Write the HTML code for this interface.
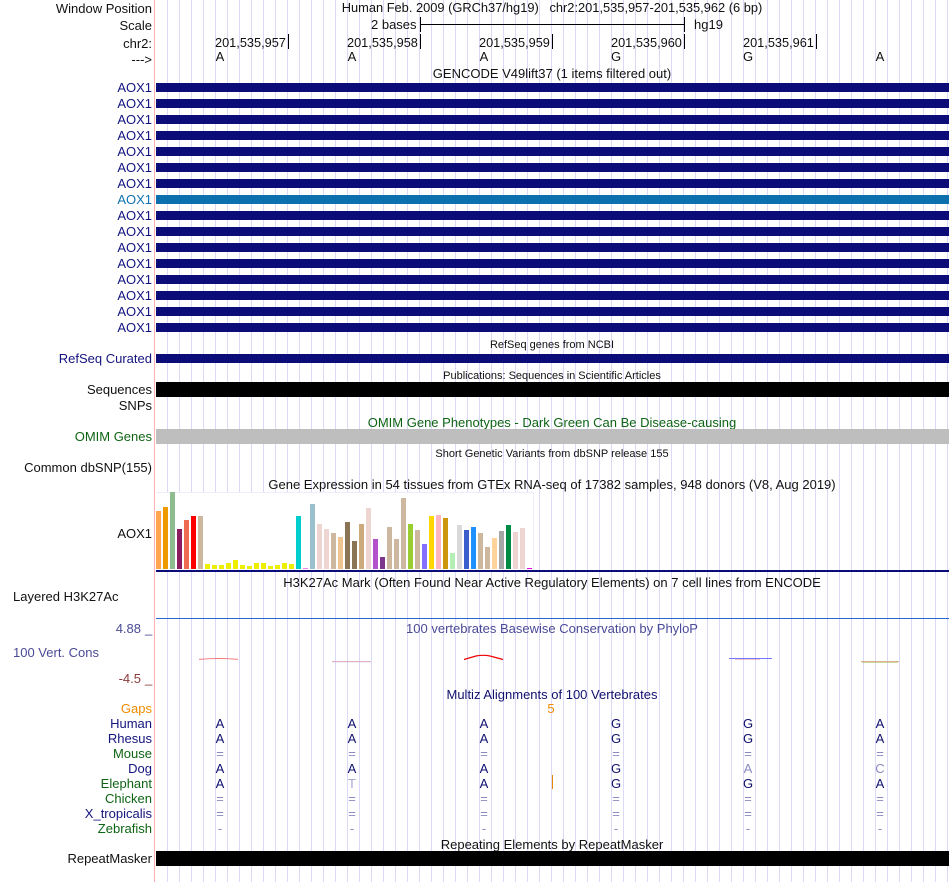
<!DOCTYPE html>
<html>
<head>
<meta charset="utf-8">
<title>Genome Browser</title>
<style>
html,body{margin:0;padding:0;background:#fff;}
#p{position:relative;width:950px;height:882px;overflow:hidden;background:#fff;font-family:"Liberation Sans",sans-serif;font-size:13px;line-height:14px;color:#111;}
#grid{position:absolute;left:156px;top:0;width:794px;height:882px;background:repeating-linear-gradient(to right,transparent 0,transparent 11px,#dad9f8 11px,#dad9f8 12px);}
#pink{position:absolute;left:154px;top:0;width:1px;height:882px;background:#ffb0b0;}
#p span{position:absolute;white-space:pre;}
.r{right:798px;}
.c{left:552px;transform:translateX(-50%);}
.m{transform:translateX(-50%);}
.s{font-size:11px;}
.o{font-size:12.75px;}
.b{position:absolute;left:156px;width:793px;}
.g{background:#0c0c78;height:9px;}
.k{background:#000;height:15px;}
.t{position:absolute;background:#000;width:1px;}
.n{color:#14147e;}
.v{color:#10106e;}
.d{color:#0f6414;}
.e{color:#8a8ac0;}
.f{color:#a8a8d0;}
</style>
</head>
<body>
<div id="p">
<div id="grid"></div>
<div id="pink"></div>

<span class="r" style="top:2px">Window Position</span>
<span class="c" style="top:1px;font-size:12.85px">Human Feb. 2009 (GRCh37/hg19)   chr2:201,535,957-201,535,962 (6 bp)</span>
<span class="r" style="top:19px">Scale</span>
<span style="top:18px;left:371px">2 bases</span>
<div class="t" style="left:420px;top:17px;height:15px"></div>
<div class="t" style="left:420px;top:24px;height:1px;width:265px"></div>
<div class="t" style="left:684px;top:17px;height:15px"></div>
<span style="top:18px;left:694px">hg19</span>
<span class="r" style="top:37px">chr2:</span>
<span class="o" style="top:36px;left:215px">201,535,957</span><div class="t" style="left:288px;top:34px;height:15px"></div>
<span class="o" style="top:36px;left:347px">201,535,958</span><div class="t" style="left:420px;top:34px;height:15px"></div>
<span class="o" style="top:36px;left:479px">201,535,959</span><div class="t" style="left:552px;top:34px;height:15px"></div>
<span class="o" style="top:36px;left:611px">201,535,960</span><div class="t" style="left:684px;top:34px;height:15px"></div>
<span class="o" style="top:36px;left:743px">201,535,961</span><div class="t" style="left:816px;top:34px;height:15px"></div>
<span class="r" style="top:53px">---&gt;</span>
<span class="m" style="top:50px;left:220px">A</span>
<span class="m" style="top:50px;left:352px">A</span>
<span class="m" style="top:50px;left:484px">A</span>
<span class="m" style="top:50px;left:616px">G</span>
<span class="m" style="top:50px;left:748px">G</span>
<span class="m" style="top:50px;left:880px">A</span>
<span class="c" style="top:67px">GENCODE V49lift37 (1 items filtered out)</span>

<span class="r n" style="top:81px">AOX1</span><div class="b g" style="top:83px"></div>
<span class="r n" style="top:97px">AOX1</span><div class="b g" style="top:99px"></div>
<span class="r n" style="top:113px">AOX1</span><div class="b g" style="top:115px"></div>
<span class="r n" style="top:129px">AOX1</span><div class="b g" style="top:131px"></div>
<span class="r n" style="top:145px">AOX1</span><div class="b g" style="top:147px"></div>
<span class="r n" style="top:161px">AOX1</span><div class="b g" style="top:163px"></div>
<span class="r n" style="top:177px">AOX1</span><div class="b g" style="top:179px"></div>
<span class="r" style="top:193px;color:#1072b0">AOX1</span><div class="b g" style="top:195px;background:#0c6fae"></div>
<span class="r n" style="top:209px">AOX1</span><div class="b g" style="top:211px"></div>
<span class="r n" style="top:225px">AOX1</span><div class="b g" style="top:227px"></div>
<span class="r n" style="top:241px">AOX1</span><div class="b g" style="top:243px"></div>
<span class="r n" style="top:257px">AOX1</span><div class="b g" style="top:259px"></div>
<span class="r n" style="top:273px">AOX1</span><div class="b g" style="top:275px"></div>
<span class="r n" style="top:289px">AOX1</span><div class="b g" style="top:291px"></div>
<span class="r n" style="top:305px">AOX1</span><div class="b g" style="top:307px"></div>
<span class="r n" style="top:321px">AOX1</span><div class="b g" style="top:323px"></div>

<span class="c s" style="top:338px">RefSeq genes from NCBI</span>
<span class="r n" style="top:352px">RefSeq Curated</span><div class="b g" style="top:354px"></div>
<span class="c s" style="top:369px">Publications: Sequences in Scientific Articles</span>
<span class="r" style="top:383px">Sequences</span><div class="b k" style="top:382px"></div>
<span class="r" style="top:399px">SNPs</span>
<span class="c d" style="top:416px">OMIM Gene Phenotypes - Dark Green Can Be Disease-causing</span>
<span class="r d" style="top:430px">OMIM Genes</span><div class="b" style="top:429px;height:15px;background:#bebebe"></div>
<span class="c s" style="top:447px">Short Genetic Variants from dbSNP release 155</span>
<span class="r" style="top:461px">Common dbSNP(155)</span>
<span class="c" style="top:478px">Gene Expression in 54 tissues from GTEx RNA-seq of 17382 samples, 948 donors (V8, Aug 2019)</span>

<svg style="position:absolute;left:156px;top:492px" width="794" height="80" viewBox="156 492 794 80">
<rect x="156" y="492" width="378" height="78" fill="#fff"/>
<path d="M156 492.5H533.5V570" fill="none" stroke="#eeedfb"/>
<rect x="156" y="511" width="5" height="58" fill="#ffa54f"/>
<rect x="163" y="507" width="5" height="62" fill="#ee9a00"/>
<rect x="170" y="492" width="5" height="77" fill="#8fbc8f"/>
<rect x="177" y="529" width="5" height="40" fill="#8b1c62"/>
<rect x="184" y="520" width="5" height="49" fill="#ee6a50"/>
<rect x="191" y="516" width="5" height="53" fill="#ff0000"/>
<rect x="198" y="516" width="5" height="53" fill="#cdb79e"/>
<rect x="205" y="564" width="5" height="5" fill="#eeee00"/>
<rect x="212" y="565" width="5" height="4" fill="#eeee00"/>
<rect x="219" y="565" width="5" height="4" fill="#eeee00"/>
<rect x="226" y="563" width="5" height="6" fill="#eeee00"/>
<rect x="233" y="560" width="5" height="9" fill="#eeee00"/>
<rect x="240" y="565" width="5" height="4" fill="#eeee00"/>
<rect x="247" y="566" width="5" height="3" fill="#eeee00"/>
<rect x="254" y="563" width="5" height="6" fill="#eeee00"/>
<rect x="261" y="563" width="5" height="6" fill="#eeee00"/>
<rect x="268" y="566" width="5" height="3" fill="#eeee00"/>
<rect x="275" y="565" width="5" height="4" fill="#eeee00"/>
<rect x="282" y="563" width="5" height="6" fill="#eeee00"/>
<rect x="289" y="564" width="5" height="5" fill="#eeee00"/>
<rect x="296" y="516" width="5" height="53" fill="#00cdcd"/>
<rect x="303" y="568" width="5" height="1" fill="#ee82ee"/>
<rect x="310" y="504" width="5" height="65" fill="#9ac0cd"/>
<rect x="317" y="524" width="5" height="45" fill="#eed5d2"/>
<rect x="324" y="529" width="5" height="40" fill="#eed5d2"/>
<rect x="331" y="533" width="5" height="36" fill="#cdb79e"/>
<rect x="338" y="537" width="5" height="32" fill="#eec591"/>
<rect x="345" y="522" width="5" height="47" fill="#8b7355"/>
<rect x="352" y="541" width="5" height="28" fill="#8b7355"/>
<rect x="359" y="524" width="5" height="45" fill="#cdaa7d"/>
<rect x="366" y="508" width="5" height="61" fill="#eed5d2"/>
<rect x="373" y="539" width="5" height="30" fill="#b452cd"/>
<rect x="380" y="557" width="5" height="12" fill="#7a378b"/>
<rect x="387" y="527" width="5" height="42" fill="#cdb79e"/>
<rect x="394" y="539" width="5" height="30" fill="#cdb79e"/>
<rect x="401" y="498" width="5" height="71" fill="#cdb79e"/>
<rect x="408" y="524" width="5" height="45" fill="#9acd32"/>
<rect x="415" y="530" width="5" height="39" fill="#cdb79e"/>
<rect x="422" y="544" width="5" height="25" fill="#8470ff"/>
<rect x="429" y="516" width="5" height="53" fill="#ffd700"/>
<rect x="436" y="515" width="5" height="54" fill="#ffb6c1"/>
<rect x="443" y="518" width="5" height="51" fill="#cd950c"/>
<rect x="450" y="553" width="5" height="16" fill="#b4eeb4"/>
<rect x="457" y="525" width="5" height="44" fill="#d9d9d9"/>
<rect x="464" y="530" width="5" height="39" fill="#3a5fcd"/>
<rect x="471" y="527" width="5" height="42" fill="#1e90ff"/>
<rect x="478" y="533" width="5" height="36" fill="#cdb79e"/>
<rect x="485" y="547" width="5" height="22" fill="#cdb79e"/>
<rect x="492" y="538" width="5" height="31" fill="#ffd39b"/>
<rect x="499" y="531" width="5" height="38" fill="#a6a6a6"/>
<rect x="506" y="525" width="5" height="44" fill="#008b45"/>
<rect x="513" y="532" width="5" height="37" fill="#eed5d2"/>
<rect x="520" y="528" width="5" height="41" fill="#eed5d2"/>
<rect x="527" y="568" width="5" height="1" fill="#ee00ee"/>
<rect x="156" y="570" width="793" height="2" fill="#0c0c78"/>
</svg>
<span class="r" style="top:527px">AOX1</span>

<span class="c" style="top:576px">H3K27Ac Mark (Often Found Near Active Regulatory Elements) on 7 cell lines from ENCODE</span>
<span style="top:590px;left:13px">Layered H3K27Ac</span>
<div class="b" style="top:618px;height:1px;background:#2a66d0"></div>

<span style="top:622px;right:809px;color:#4a4a96">4.88</span>
<span style="top:622px;left:145px;color:#4a4a96">_</span>
<span class="c" style="top:622px;color:#4a4a96">100 vertebrates Basewise Conservation by PhyloP</span>
<span style="top:646px;left:13px;color:#4a4a96">100 Vert. Cons</span>
<span style="top:672px;right:809px;color:#8b3a3a">-4.5</span>
<span style="top:672px;left:145px;color:#8b3a3a">_</span>

<svg style="position:absolute;left:156px;top:650px" width="794" height="20" viewBox="156 650 794 20" fill="none">
<path d="M199 659.3Q219 657.8 238 659.3" stroke="#f86060" stroke-width=".8"/>
<path d="M332 661.5H371" stroke="#eca0a0" stroke-width=".7"/>
<path d="M332 662H371" stroke="#a8a8e4" stroke-width=".4"/>
<path d="M464 659.5L476 656Q483 654.6 490 656L503 659.5" stroke="#f00000" stroke-width="1.2"/>
<path d="M729 658.5H772" stroke="#4a4aff" stroke-width=".8"/>
<path d="M735 659.4H760" stroke="#d890a0" stroke-width=".5"/>
<path d="M861 661.5H899" stroke="#d09868" stroke-width=".7"/>
<path d="M862 662.3H898" stroke="#b0c060" stroke-width=".6"/>
</svg>

<span class="c" style="top:688px;color:#10106e">Multiz Alignments of 100 Vertebrates</span>
<span class="r" style="top:702px;color:#f08c00">Gaps</span>
<span class="m" style="top:702px;left:551px;color:#f08c00">5</span>
<span class="r n" style="top:717px">Human</span>
<span class="r n" style="top:732px">Rhesus</span>
<span class="r d" style="top:747px">Mouse</span>
<span class="r n" style="top:762px">Dog</span>
<span class="r d" style="top:777px">Elephant</span>
<span class="r d" style="top:792px">Chicken</span>
<span class="r n" style="top:807px">X_tropicalis</span>
<span class="r d" style="top:822px">Zebrafish</span>

<span class="m v" style="top:717px;left:220px">A</span><span class="m v" style="top:717px;left:352px">A</span><span class="m v" style="top:717px;left:484px">A</span><span class="m v" style="top:717px;left:616px">G</span><span class="m v" style="top:717px;left:748px">G</span><span class="m v" style="top:717px;left:880px">A</span>
<span class="m v" style="top:732px;left:220px">A</span><span class="m v" style="top:732px;left:352px">A</span><span class="m v" style="top:732px;left:484px">A</span><span class="m v" style="top:732px;left:616px">G</span><span class="m v" style="top:732px;left:748px">G</span><span class="m v" style="top:732px;left:880px">A</span>
<span class="m e" style="top:747px;left:220px">=</span><span class="m e" style="top:747px;left:352px">=</span><span class="m e" style="top:747px;left:484px">=</span><span class="m e" style="top:747px;left:616px">=</span><span class="m e" style="top:747px;left:748px">=</span><span class="m e" style="top:747px;left:880px">=</span>
<span class="m v" style="top:762px;left:220px">A</span><span class="m v" style="top:762px;left:352px">A</span><span class="m v" style="top:762px;left:484px">A</span><span class="m v" style="top:762px;left:616px">G</span><span class="m e" style="top:762px;left:748px">A</span><span class="m e" style="top:762px;left:880px">C</span>
<span class="m v" style="top:777px;left:220px">A</span><span class="m f" style="top:777px;left:352px">T</span><span class="m v" style="top:777px;left:484px">A</span><span class="m v" style="top:777px;left:616px">G</span><span class="m v" style="top:777px;left:748px">G</span><span class="m v" style="top:777px;left:880px">A</span>
<div class="t" style="left:552px;top:775px;height:14px;background:#e8870a"></div>
<span class="m e" style="top:792px;left:220px">=</span><span class="m e" style="top:792px;left:352px">=</span><span class="m e" style="top:792px;left:484px">=</span><span class="m e" style="top:792px;left:616px">=</span><span class="m e" style="top:792px;left:748px">=</span><span class="m e" style="top:792px;left:880px">=</span>
<span class="m e" style="top:807px;left:220px">=</span><span class="m e" style="top:807px;left:352px">=</span><span class="m e" style="top:807px;left:484px">=</span><span class="m e" style="top:807px;left:616px">=</span><span class="m e" style="top:807px;left:748px">=</span><span class="m e" style="top:807px;left:880px">=</span>
<span class="m e" style="top:822px;left:220px">-</span><span class="m e" style="top:822px;left:352px">-</span><span class="m e" style="top:822px;left:484px">-</span><span class="m e" style="top:822px;left:616px">-</span><span class="m e" style="top:822px;left:748px">-</span><span class="m e" style="top:822px;left:880px">-</span>

<span class="c" style="top:838px">Repeating Elements by RepeatMasker</span>
<span class="r" style="top:852px">RepeatMasker</span><div class="b k" style="top:851px"></div>
</div>
</body>
</html>
